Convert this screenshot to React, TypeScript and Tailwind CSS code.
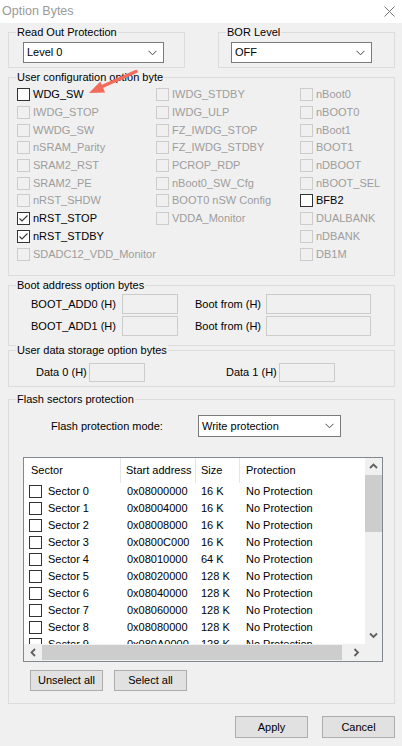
import type { ReactNode } from "react";

type Opt = { label: string; enabled?: boolean; checked?: boolean };

const col1: Opt[] = [
  { label: "WDG_SW", enabled: true },
  { label: "IWDG_STOP" },
  { label: "WWDG_SW" },
  { label: "nSRAM_Parity" },
  { label: "SRAM2_RST" },
  { label: "SRAM2_PE" },
  { label: "nRST_SHDW" },
  { label: "nRST_STOP", enabled: true, checked: true },
  { label: "nRST_STDBY", enabled: true, checked: true },
  { label: "SDADC12_VDD_Monitor" },
];

const col2: Opt[] = [
  { label: "IWDG_STDBY" },
  { label: "IWDG_ULP" },
  { label: "FZ_IWDG_STOP" },
  { label: "FZ_IWDG_STDBY" },
  { label: "PCROP_RDP" },
  { label: "nBoot0_SW_Cfg" },
  { label: "BOOT0 nSW Config" },
  { label: "VDDA_Monitor" },
];

const col3: Opt[] = [
  { label: "nBoot0" },
  { label: "nBOOT0" },
  { label: "nBoot1" },
  { label: "BOOT1" },
  { label: "nDBOOT" },
  { label: "nBOOT_SEL" },
  { label: "BFB2", enabled: true },
  { label: "DUALBANK" },
  { label: "nDBANK" },
  { label: "DB1M" },
];

const sectors = [
  ["0x08000000", "16 K"],
  ["0x08004000", "16 K"],
  ["0x08008000", "16 K"],
  ["0x0800C000", "16 K"],
  ["0x08010000", "64 K"],
  ["0x08020000", "128 K"],
  ["0x08040000", "128 K"],
  ["0x08060000", "128 K"],
  ["0x08080000", "128 K"],
  ["0x080A0000", "128 K"],
];

function Checkbox({ checked = false, disabled = false }: { checked?: boolean; disabled?: boolean }) {
  return (
    <span
      className={`flex h-[13px] w-[13px] shrink-0 items-center justify-center border ${
        disabled ? "border-[#cccccc] bg-[#f0f0f0]" : "border-[#333333] bg-white"
      }`}
    >
      {checked ? (
        <svg width="11" height="11" viewBox="0 0 11 11" aria-hidden="true">
          <polyline points="1.5,5.5 4,8 9.5,2.5" fill="none" stroke="#333333" strokeWidth="1.1" />
        </svg>
      ) : null}
    </span>
  );
}

function OptionItem({ opt }: { opt: Opt }) {
  return (
    <div className="flex h-[17.7px] items-center gap-[3px]">
      <Checkbox checked={opt.checked} disabled={!opt.enabled} />
      <span className={opt.enabled ? "text-black" : "text-[#9d9d9d]"}>{opt.label}</span>
    </div>
  );
}

function GroupBox({ label, className, children }: { label: string; className: string; children: ReactNode }) {
  return (
    <div className={`relative border border-[#dcdcdc] ${className}`}>
      <span className="absolute left-[7px] top-[-7px] bg-[#f0f0f0] px-px leading-[13px]">{label}</span>
      {children}
    </div>
  );
}

function DownChevron() {
  return (
    <svg width="9" height="6" viewBox="0 0 9 6" aria-hidden="true">
      <polyline points="0.5,0.8 4.5,4.8 8.5,0.8" fill="none" stroke="#444444" strokeWidth="1" />
    </svg>
  );
}

function Select({ value, className }: { value: string; className: string }) {
  return (
    <div className={`flex items-center justify-between border border-[#7a7a7a] bg-white pl-[3px] pr-[6px] ${className}`}>
      <span>{value}</span>
      <DownChevron />
    </div>
  );
}

function Field({ className }: { className: string }) {
  return <div className={`border border-[#cccccc] bg-[#f0f0f0] ${className}`} />;
}

function Button({ label, className = "" }: { label: string; className?: string }) {
  return (
    <div className={`flex h-[21px] w-[73px] items-center justify-center border border-[#adadad] bg-[#e1e1e1] ${className}`}>
      {label}
    </div>
  );
}

function ScrollArrow({ dir }: { dir: "up" | "down" | "left" | "right" }) {
  const pts = {
    up: "1,5 4.5,1.5 8,5",
    down: "1,1.5 4.5,5 8,1.5",
    left: "5,1 1.5,4.5 5,8",
    right: "1.5,1 5,4.5 1.5,8",
  }[dir];
  const vertical = dir === "up" || dir === "down";
  return (
    <svg width={vertical ? 9 : 7} height={vertical ? 7 : 9} viewBox={vertical ? "0 0 9 7" : "0 0 7 9"} aria-hidden="true">
      <polyline points={pts} fill="none" stroke="#606060" strokeWidth="1.8" />
    </svg>
  );
}

export default function App() {
  return (
    <div
      className="relative min-h-[746px] w-[402px] bg-[#f0f0f0] text-[11px] leading-[13px] text-black"
      style={{ fontFamily: '"Liberation Sans", Arial, sans-serif' }}
    >
      {/* title bar */}
      <div className="flex h-[23px] items-center justify-between bg-white pl-[2px] pr-[7px]">
        <span className="text-[12.5px] text-[#9a9a9a]">Option Bytes</span>
        <svg width="11" height="11" viewBox="0 0 11 11" aria-hidden="true">
          <path d="M0.5 0.5 L10.5 10.5 M10.5 0.5 L0.5 10.5" stroke="#777777" strokeWidth="1" />
        </svg>
      </div>

      <div className="flex flex-col pl-[8px] pr-[7px] pt-[9px]">
        <div className="flex">
          <GroupBox label="Read Out Protection" className="h-[36px] w-[177px] pl-[14px] pt-[9px]">
            <Select value="Level 0" className="h-[21px] w-[141px]" />
          </GroupBox>
          <GroupBox label="BOR Level" className="ml-[33px] h-[36px] w-[177px] pl-[12px] pt-[9px]">
            <Select value="OFF" className="h-[21px] w-[141px]" />
          </GroupBox>
        </div>

        <GroupBox label="User configuration option byte" className="mt-[9px] h-[199px] pl-[8px] pt-[8px]">
          <div className="flex">
            <div className="flex w-[139px] flex-col">
              {col1.map((o) => (
                <OptionItem key={o.label} opt={o} />
              ))}
            </div>
            <div className="flex w-[144px] flex-col">
              {col2.map((o) => (
                <OptionItem key={o.label} opt={o} />
              ))}
            </div>
            <div className="flex flex-col">
              {col3.map((o) => (
                <OptionItem key={o.label} opt={o} />
              ))}
            </div>
          </div>
        </GroupBox>

        <GroupBox label="Boot address option bytes" className="mt-[9px] h-[61px] pl-[22px] pt-[8px]">
          <div className="flex flex-col gap-[2px]">
            {["BOOT_ADD0 (H)", "BOOT_ADD1 (H)"].map((l) => (
              <div key={l} className="flex h-[20px] items-center">
                <span className="w-[91px]">{l}</span>
                <Field className="h-[20px] w-[56px]" />
                <span className="ml-[17px] w-[71px]">Boot from (H)</span>
                <Field className="h-[20px] w-[105px]" />
              </div>
            ))}
          </div>
        </GroupBox>

        <GroupBox label="User data storage option bytes" className="mt-[4px] h-[37px] pl-[27px] pt-[12px]">
          <div className="flex h-[19px] items-center">
            <span className="w-[53px]">Data 0 (H)</span>
            <Field className="h-[19px] w-[56px]" />
            <span className="ml-[81px] w-[53px]">Data 1 (H)</span>
            <Field className="h-[19px] w-[56px]" />
          </div>
        </GroupBox>

        <GroupBox label="Flash sectors protection" className="mt-[12px] h-[305px] pl-[14px] pt-[15px]">
          <div className="flex h-[22px] items-center pl-[28px]">
            <span className="w-[147px]">Flash protection mode:</span>
            <Select value="Write protection" className="h-[22px] w-[143px]" />
          </div>

          <div className="mt-[20px] flex h-[205px] w-[360px] flex-col border border-[#828790] bg-white">
            <div className="flex h-[186px]">
              <div className="w-[341px] overflow-hidden">
                <div className="flex h-[25px] items-center">
                  <span className="flex h-full w-[97px] items-center border-r border-[#e5e5e5] pl-[7px]">Sector</span>
                  <span className="flex h-full w-[75px] items-center border-r border-[#e5e5e5] pl-[5px]">Start address</span>
                  <span className="flex h-full w-[44px] items-center border-r border-[#e5e5e5] pl-[5px]">Size</span>
                  <span className="flex h-full items-center pl-[6px]">Protection</span>
                </div>
                {sectors.map(([addr, size], i) => (
                  <div key={addr} className="flex h-[17px] items-center">
                    <div className="flex w-[97px] items-center gap-[6px] pl-[5px]">
                      <Checkbox />
                      <span>Sector {i}</span>
                    </div>
                    <span className="w-[75px] pl-[6px]">{addr}</span>
                    <span className="w-[44px] pl-[5px]">{size}</span>
                    <span className="pl-[6px]">No Protection</span>
                  </div>
                ))}
              </div>
              <div className="flex w-[17px] flex-col bg-[#f0f0f0]">
                <div className="flex h-[17px] items-center justify-center">
                  <ScrollArrow dir="up" />
                </div>
                <div className="h-[57px] bg-[#cdcdcd]" />
                <div className="flex-1" />
                <div className="flex h-[17px] items-center justify-center">
                  <ScrollArrow dir="down" />
                </div>
              </div>
            </div>
            <div className="flex h-[17px] bg-[#f0f0f0]">
              <div className="flex h-[17px] w-[18px] items-center justify-center">
                <ScrollArrow dir="left" />
              </div>
              <div className="my-[1px] w-[300px] bg-[#cdcdcd]" />
              <div className="flex h-[17px] flex-1 items-center justify-end pr-[22px]">
                <ScrollArrow dir="right" />
              </div>
            </div>
          </div>

          <div className="mt-[8px] flex gap-[11px] pl-[7px]">
            <Button label="Unselect all" />
            <Button label="Select all" />
          </div>
        </GroupBox>

        <div className="mt-[12px] flex justify-end gap-[14px]">
          <Button label="Apply" className="h-[22px]" />
          <Button label="Cancel" className="h-[22px]" />
        </div>
      </div>

      {/* annotation arrow */}
      <svg className="pointer-events-none absolute left-0 top-0" width="402" height="746" aria-hidden="true">
        <line x1="136" y1="71.5" x2="101" y2="87" stroke="#f36b5c" strokeWidth="3.5" strokeLinecap="round" />
        <polygon points="89,93 100.3,81.4 105.1,92.4" fill="#f36b5c" />
      </svg>
    </div>
  );
}
